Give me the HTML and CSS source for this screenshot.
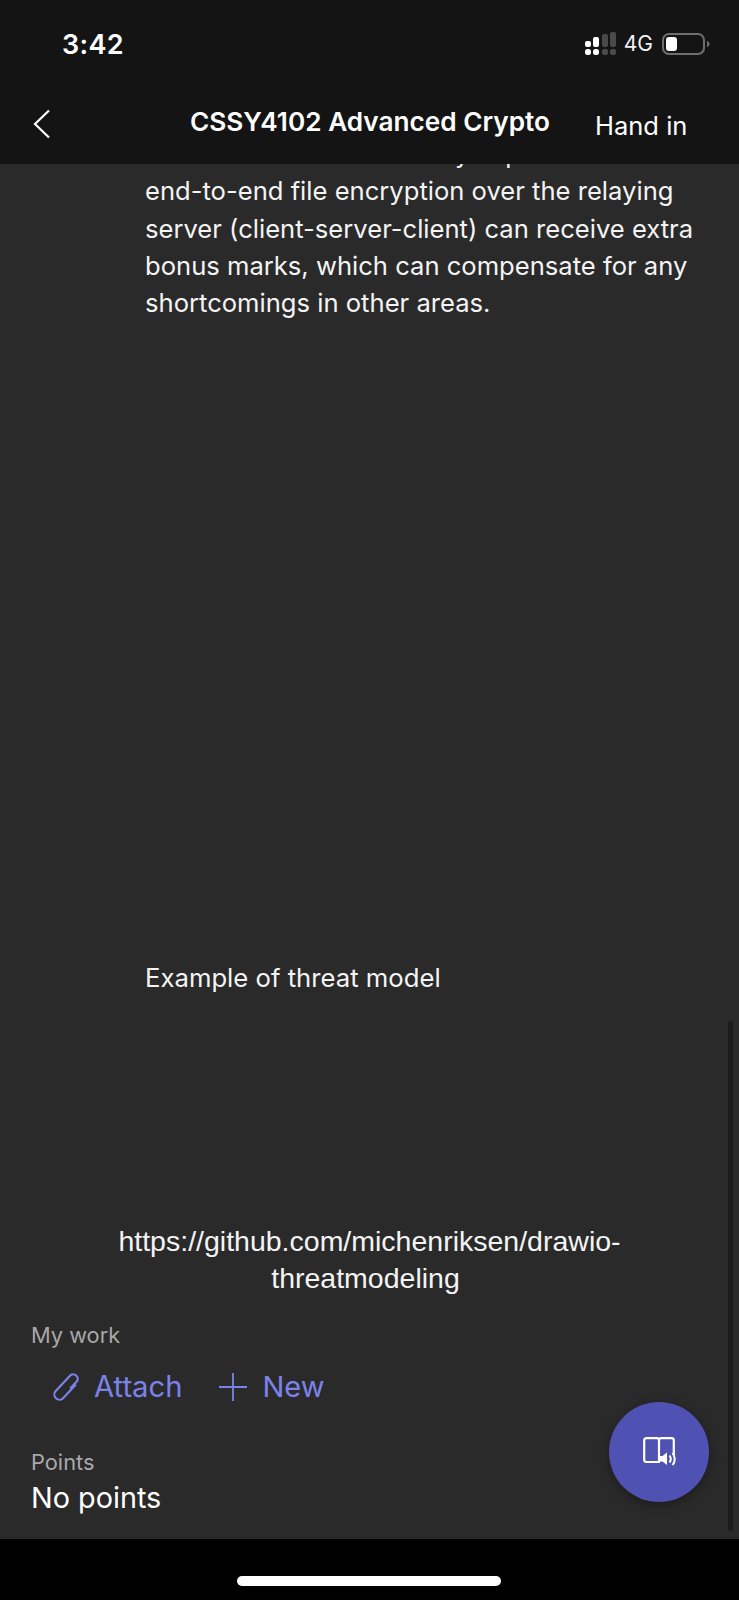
FILE: index.html
```html
<!DOCTYPE html>
<html lang="en">
<head>
<meta charset="utf-8">
<title>CSSY4102 Advanced Crypto</title>
<link rel="stylesheet" href="styles.css">
</head>
<body>
<div class="phone">
  <header class="top">
    <div class="status">
      <span class="time">3:42</span>
      <div class="status-right">
        <svg class="signal" width="32" height="24" viewBox="0 0 32 24">
          <g fill="#fff">
            <rect x="0" y="9" width="6" height="6" rx="2"/>
            <rect x="0" y="17" width="6" height="6" rx="2.500"/>
            <rect x="8" y="5" width="6" height="10" rx="2"/>
            <rect x="8" y="17" width="6" height="6" rx="2.500"/>
          </g>
          <g fill="#4a4a4a">
            <rect x="17" y="2" width="6" height="13" rx="2"/>
            <rect x="17" y="17" width="6" height="6" rx="2"/>
            <rect x="25" y="0" width="6" height="15" rx="2"/>
            <rect x="25" y="17" width="6" height="6" rx="2"/>
          </g>
        </svg>
        <span class="net">4G</span>
        <svg class="battery" width="48" height="22" viewBox="0 0 48 22">
          <rect x="1" y="1" width="41" height="20" rx="6" fill="none" stroke="#6f6f6f" stroke-width="2"/>
          <rect x="4" y="4" width="11" height="14" rx="3" fill="#fff"/>
          <path d="M45 7.500 L47.500 10 V12 L45 14.500 Z" fill="#6f6f6f"/>
        </svg>
      </div>
    </div>
    <nav class="nav">
      <svg class="back" width="18" height="30" viewBox="0 0 18 30">
        <path d="M16 1.500 L2 15 L16 28.500" fill="none" stroke="#fff" stroke-width="2.200"/>
      </svg>
      <h1 class="title">CSSY4102 Advanced Crypto</h1>
      <span class="hand">Hand in</span>
    </nav>
  </header>

  <main class="content">
    <p class="para">Students who successfully implement<br>end-to-end file encryption over the relaying server (client-server-client) can receive extra bonus marks, which can compensate for any shortcomings in other areas.</p>
    <p class="caption">Example of threat model</p>
    <p class="link">https://github.com/michenriksen/drawio-<span class="link-tail">threatmodeling</span></p>

    <section class="work">
      <h2 class="label">My work</h2>
      <div class="actions">
        <span class="action">
          <svg class="clip" width="28" height="30" viewBox="-14 -15 28 30">
            <path transform="rotate(43) scale(1.120)" d="M4.300 -7 V9.500 A4.600 4.600 0 0 1 -4.900 9.500 V-9.500 A3.800 3.800 0 0 1 -1 -13 C1.500 -13 3 -11.500 3 -9.500 L3 -1" fill="none" stroke="#7b83eb" stroke-width="1.900"/>
          </svg>
          Attach
        </span>
        <span class="action action-new">
          <svg class="plus" width="28" height="28" viewBox="0 0 28 28">
            <path d="M14 0 V28 M0 14 H28" stroke="#7b83eb" stroke-width="1.800"/>
          </svg>
          New
        </span>
      </div>
    </section>

    <section class="points">
      <h2 class="label">Points</h2>
      <p class="value">No points</p>
    </section>
  </main>

  <footer class="home"><span class="home-bar"></span></footer>

  <div class="scrollbar"></div>
  <button class="fab" aria-label="Immersive reader">
    <svg width="34" height="31" viewBox="0 0 34 31">
      <path d="M16 25 H3.500 C2 25 1.200 24.200 1.200 23 V3.500 C1.200 2 2 1.200 3.500 1.200 H14 C15.200 1.200 16 2 16 3.500 Z M16 3.500 C16 2 16.800 1.200 18 1.200 H28.500 C30 1.200 30.800 2 30.800 3.500 V18" fill="none" stroke="#fff" stroke-width="2.200"/>
      <path d="M16 19 H19.500 L24 15.500 V28 L19.500 24.500 H16 Z" fill="#fff"/>
      <path d="M26.500 18.500 C28 20.500 28 23.500 26.500 25.500 M29.500 16 C32.500 19.500 32.500 24.500 29.500 28" fill="none" stroke="#fff" stroke-width="2"/>
    </svg>
  </button>
</div>
</body>
</html>
```

FILE: styles.css
```css
* {
  box-sizing: border-box;
}

html,
body {
  margin: 0;
  padding: 0;
  background: #000;
}

body {
  font-family: Inter, "Liberation Sans", sans-serif;
  color: #fff;
}

.phone {
  position: relative;
  width: 739px;
  height: 1600px;
  display: flex;
  flex-direction: column;
  overflow: hidden;
  background: #2a2a2a;
}

.top {
  position: relative;
  z-index: 2;
  height: 164px;
  flex: none;
  background: #141414;
}

.status {
  height: 88px;
  padding: 27px 29px 0 62px;
  display: flex;
  justify-content: space-between;
  align-items: flex-start;
}

.time {
  font-size: 27px;
  line-height: 36px;
  font-weight: 600;
  letter-spacing: 0.3px;
}

.status-right {
  display: flex;
  align-items: center;
  padding-top: 5px;
}

.signal {
  display: block;
  margin-right: 7px;
}

.net {
  font-size: 21px;
  line-height: 24px;
  font-weight: 400;
  margin-right: 9px;
  color: #f2f2f2;
}

.battery {
  display: block;
}

.nav {
  display: flex;
  align-items: flex-start;
  padding-left: 33px;
}

.back {
  margin-top: 21px;
  flex: none;
}

.title {
  margin: 0;
  padding: 16px 0 0 139px;
  font-size: 26.200px;
  line-height: 36px;
  font-weight: 600;
  white-space: nowrap;
}

.hand {
  padding: 20px 0 0 45px;
  font-size: 25.500px;
  line-height: 36px;
  white-space: nowrap;
}

.content {
  flex: 1;
  min-height: 0;
  display: flex;
  flex-direction: column;
  overflow: hidden;
}

.para {
  margin: -29px 32px 0 145px;
  font-size: 25.600px;
  line-height: 37.300px;
  color: #f4f4f4;
}

.caption {
  margin: 638px 32px 0 145px;
  font-size: 25.700px;
  line-height: 37.300px;
  color: #f4f4f4;
}

.link {
  margin: 226px 80px 0;
  font-family: "Liberation Sans", Arial, sans-serif;
  font-size: 28.500px;
  line-height: 37.700px;
  text-align: center;
  color: #f4f4f4;
}

.link-tail {
  padding-right: 8px;
}

.work {
  padding: 22px 0 0 31px;
}

.label {
  margin: 0;
  font-size: 21.800px;
  line-height: 30px;
  font-weight: 400;
  color: #a8a8a8;
}

.actions {
  display: flex;
  gap: 37px;
  padding: 19px 0 0 22px;
}

.action {
  display: flex;
  align-items: center;
  gap: 13px;
  font-size: 29.200px;
  line-height: 36px;
  color: #7b83eb;
}

.action-new {
  gap: 15px;
  font-size: 29px;
}

.clip,
.plus {
  flex: none;
  display: block;
}

.points {
  padding: 42px 0 0 31px;
}

.value {
  margin: 2px 0 0;
  font-size: 28.800px;
  line-height: 38px;
  color: #fff;
}

.home {
  height: 61px;
  flex: none;
  background: #000;
  display: flex;
  justify-content: center;
  padding: 37px 0 0 0;
}

.home-bar {
  width: 264px;
  height: 10px;
  margin-right: 1px;
  border-radius: 5px;
  background: #fff;
}

.scrollbar {
  position: absolute;
  top: 1021px;
  left: 728px;
  width: 5px;
  height: 510px;
  border-radius: 3px;
  background: #1c1c1c;
}

.fab {
  position: absolute;
  left: 609px;
  top: 1402px;
  width: 100px;
  height: 100px;
  padding: 0 0 0 2px;
  border: 0;
  border-radius: 50%;
  background: #4f52b2;
  box-shadow: 0 3px 12px rgba(0, 0, 0, 0.35);
  display: flex;
  align-items: center;
  justify-content: center;
}

.fab svg {
  display: block;
}
```
